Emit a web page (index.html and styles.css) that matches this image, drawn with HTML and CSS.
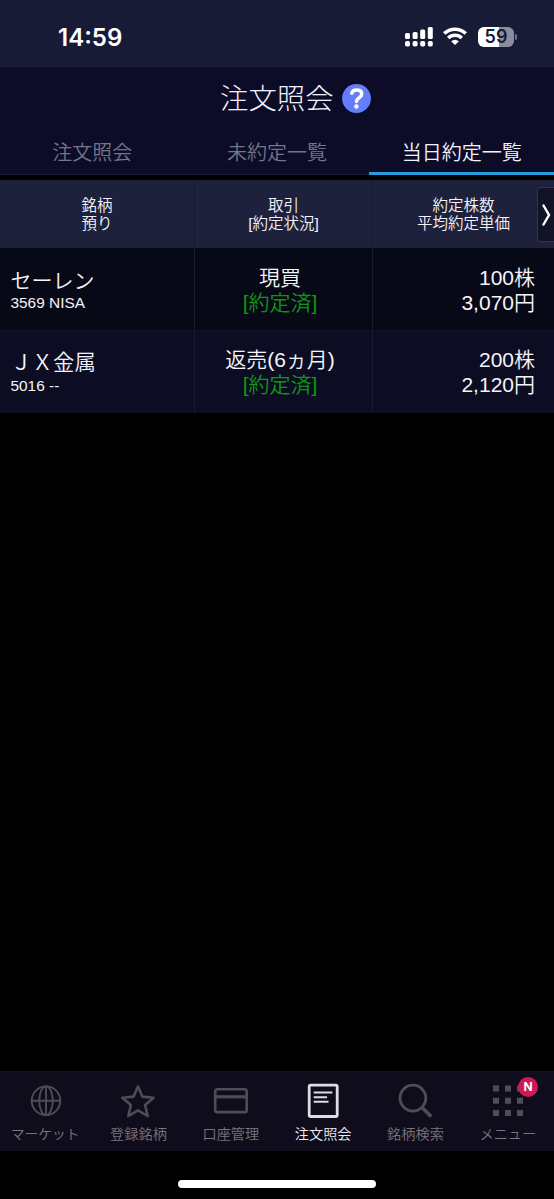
FILE: index.html
```html
<!DOCTYPE html>
<html lang="ja">
<head>
<meta charset="utf-8">
<title>注文照会</title>
<link rel="stylesheet" href="styles.css">
</head>
<body>
<div class="app">
  <div class="status">
    <span class="clock">14:59</span>
    <div class="status-icons">
      <svg class="signal" width="28" height="20" viewBox="0 0 28 20" fill="#fff">
        <rect x="0" y="6" width="5" height="6" rx="1.5"/><rect x="7.6" y="5" width="5" height="7" rx="1.5"/><rect x="15.2" y="2.5" width="5" height="9.5" rx="1.5"/><rect x="22.8" y="0" width="5" height="12" rx="1.5"/>
        <rect x="0" y="14" width="5" height="5.5" rx="1.8"/><rect x="7.6" y="14" width="5" height="5.5" rx="1.8"/><rect x="15.2" y="14" width="5" height="5.5" rx="1.8"/><rect x="22.8" y="14" width="5" height="5.5" rx="1.8"/>
      </svg>
      <svg class="wifi" width="24" height="18" viewBox="0 0 24 18" fill="none" stroke="#fff" stroke-width="3.5">
        <path d="M1.2 6.6a15.6 15.6 0 0 1 21.6 0"/><path d="M5.2 11a9.8 9.8 0 0 1 13.6 0"/><path d="M12 18l-3.9-3.7q3.9-3.2 7.8 0z" fill="#fff" stroke="none"/>
      </svg>
      <div class="battery"><span class="battery-level">59</span><i class="battery-tip"></i></div>
    </div>
  </div>
  <header class="header">
    <div class="title-row">
      <h1 class="title">注文照会</h1>
      <svg class="help" width="29" height="29" viewBox="0 0 29 29"><circle cx="14.5" cy="14.5" r="14.4" fill="#657dfa"/><path d="M9.8 9.1C11 4.8 19.7 4.8 19.7 10c0 4-5.2 3.8-5.2 7.6" fill="none" stroke="#fff" stroke-width="3.5" stroke-linecap="round"/><circle cx="14.4" cy="22.5" r="2.2" fill="#fff"/></svg>
    </div>
    <nav class="tabs">
      <a class="tab">注文照会</a>
      <a class="tab">未約定一覧</a>
      <a class="tab tab-active">当日約定一覧</a>
    </nav>
  </header>
  <main class="main">
    <div class="row row-head">
      <div class="cell">銘柄<br>預り</div>
      <div class="cell">取引<br>[約定状況]</div>
      <div class="cell">約定株数<br>平均約定単価</div>
      <div class="scroll-next"><svg width="9" height="22" viewBox="0 0 9 22"><path d="M1.5 1.5L7 11 1.5 20.5" fill="none" stroke="#fff" stroke-width="2.4" stroke-linecap="round"/></svg></div>
    </div>
    <div class="row">
      <div class="cell cell-name"><span>セーレン</span><small class="code">3569 NISA</small></div>
      <div class="cell cell-trade"><span>現買</span><span class="done">[約定済]</span></div>
      <div class="cell cell-num"><span>100株</span><span>3,070円</span></div>
    </div>
    <div class="row row-alt">
      <div class="cell cell-name"><span>ＪＸ金属</span><small class="code">5016 --</small></div>
      <div class="cell cell-trade"><span>返売(6ヵ月)</span><span class="done">[約定済]</span></div>
      <div class="cell cell-num"><span>200株</span><span>2,120円</span></div>
    </div>
  </main>
  <nav class="bottom">
    <a class="item"><svg class="icon" viewBox="0 0 36 36"><g stroke-width="1.9"><circle cx="18" cy="17.7" r="14.3"/><ellipse cx="18" cy="17.7" rx="6.8" ry="14.3"/><path d="M18 3.4v28.6M3.7 17.7h28.6"/></g></svg><span class="label">マーケット</span></a>
    <a class="item"><svg class="icon" viewBox="0 0 36 36"><path stroke-width="2.6" stroke-linejoin="round" d="M18 3.4l4.4 10.2 11.3 1.1-8.6 7.3 2.6 11L18 27.3 8.3 33l2.6-11-8.6-7.3 11.3-1.1z"/></svg><span class="label">登録銘柄</span></a>
    <a class="item"><svg class="icon" viewBox="0 0 36 36"><rect x="2.2" y="6.3" width="31.5" height="22.8" rx="2.2" stroke-width="2.6"/><path stroke-width="3.2" d="M2.2 13.8h31.5"/></svg><span class="label">口座管理</span></a>
    <a class="item item-active"><svg class="icon" viewBox="0 0 36 36"><rect x="4.2" y="2.2" width="28" height="31.3" rx="1.5" stroke-width="2.8"/><path stroke-width="2" d="M8.7 9.5h18.7M8.7 14.2h13.3M8.7 18.8h14.8"/></svg><span class="label">注文照会</span></a>
    <a class="item"><svg class="icon" viewBox="0 0 36 36"><circle cx="15.9" cy="15.1" r="12.9" stroke-width="2.8"/><path stroke-width="3.8" d="M25 24.5l9.2 9"/></svg><span class="label">銘柄検索</span></a>
    <a class="item"><svg class="icon icon-grid" viewBox="0 0 36 36"><path d="M3 2.5h6v6H3zM15 2.5h6v6h-6zM27 2.5h6v6h-6zM3 14.7h6v6H3zM15 14.7h6v6h-6zM27 14.7h6v6h-6zM3 27h6v6H3zM15 27h6v6h-6zM27 27h6v6h-6z"/></svg><span class="label">メニュー</span><b class="badge">N</b></a>
  </nav>
  <div class="home"><div class="home-bar"></div></div>
</div>
</body>
</html>
```
FILE: styles.css
```css
* { box-sizing: border-box; }
body {
  margin: 0;
  background: #000;
  color: #f4f4fa;
  font-family: "Liberation Sans", "Noto Sans CJK JP", sans-serif;
}
.app { display: flex; flex-direction: column; width: 554px; height: 1199px; overflow: hidden; }

.status { display: flex; justify-content: space-between; height: 67px; padding: 0 40px 0 58px; background: #181b35; }
.clock { margin-top: 23px; font: 600 24px/30px Inter, sans-serif; color: #fff; }
.status-icons { display: flex; align-items: flex-start; padding-top: 27px; }
.wifi { margin-left: 10px; }
.battery {
  position: relative; width: 36px; height: 20px; margin-left: 11px; border-radius: 6px;
  background: linear-gradient(90deg, #fff 59%, #8b8c9d 59%);
  color: #181b35; font: 600 18px/20px Inter, sans-serif; text-align: center;
}
.battery-tip { position: absolute; left: 37px; top: 7px; width: 2px; height: 6px; border-radius: 0 2px 2px 0; background: #777989; }

.header { height: 108px; background: #0c0c28; }
.title-row { display: flex; height: 62px; padding-left: 220px; align-items: center; }
.title { margin: -2px 0 0; font: 300 28.4px/40px "Noto Sans CJK JP", sans-serif; color: #f2f2fc; }
.help { margin-left: 8px; }
.tabs { display: grid; grid-template-columns: repeat(3, 1fr); height: 46px; border-bottom: 1px solid #191a32; }
.tab { height: 46px; font: 350 20px/46px "Noto Sans CJK JP DemiLight", "Noto Sans CJK JP", sans-serif; text-align: center; color: #74748a; }
.tab-active { color: #f2f2fb; border-bottom: 3px solid #239ddd; }

.main { flex: 1; padding-top: 5px; }
.row {
  position: relative; display: grid; grid-template-columns: 195px 178px 181px; height: 82px; background: #080917;
  font-family: "Liberation Sans", "Noto Sans CJK JP DemiLight", "Noto Sans CJK JP", sans-serif;
  font-size: 21px; line-height: 25px; font-weight: 350;
}
.row-alt { height: 83px; background: #0c0d23; border-top: 1px solid #12142a; }
.cell { display: flex; flex-direction: column; justify-content: center; padding-top: 2px; text-align: center; border-right: 1px solid #191b33; }
.cell:nth-child(3) { border-right: 0; }
.cell-name { padding-left: 10.5px; text-align: left; }
.cell-trade { padding-right: 7px; }
.cell-num { padding-right: 19px; text-align: right; }
.row-alt .cell { padding-top: 0; }
.row-alt .cell-name { padding-top: 2px; font-size: 21.3px; }
.code { font-size: 15.4px; line-height: 19px; }
.done { color: #0c990f; }
.row-head { height: 68px; background: #1e213b; font-size: 15.5px; line-height: 18.5px; }
.row-head .cell { display: block; padding-top: 16.5px; border-color: #161a36; }
.scroll-next {
  position: absolute; right: 0; top: 7px; width: 17px; height: 55px; padding-left: 4px;
  display: flex; align-items: center; background: #121326; border: 1px solid #30334a; border-right: 0; border-radius: 3px 0 0 3px;
}

.bottom { display: grid; grid-template-columns: repeat(6, 1fr); height: 80px; background: #0f0d1b; border-top: 1px solid #14121f; }
.item { position: relative; display: flex; flex-direction: column; align-items: center; padding-top: 11px; color: #777580; font: 350 14.2px/20px "Noto Sans CJK JP DemiLight", "Noto Sans CJK JP", sans-serif; }
.icon { width: 36px; height: 36px; margin-bottom: 4px; fill: none; stroke: #4e4c59; }
.icon-grid { fill: #4e4c59; stroke: none; }
.label { white-space: nowrap; }
.item:first-child .label { padding-right: 2px; font-size: 13.8px; }
.item-active { color: #eeeef8; }
.item-active .icon { stroke: #dedce9; }
.badge { position: absolute; left: 56.5px; top: 5px; width: 20px; height: 20px; border-radius: 50%; background: #d51656; color: #fff; font: 700 12px/20px Inter, sans-serif; text-align: center; }
.home { height: 48px; padding-top: 29px; }
.home-bar { width: 198px; height: 8px; margin: 0 auto; border-radius: 4px; background: #fff; }
```
